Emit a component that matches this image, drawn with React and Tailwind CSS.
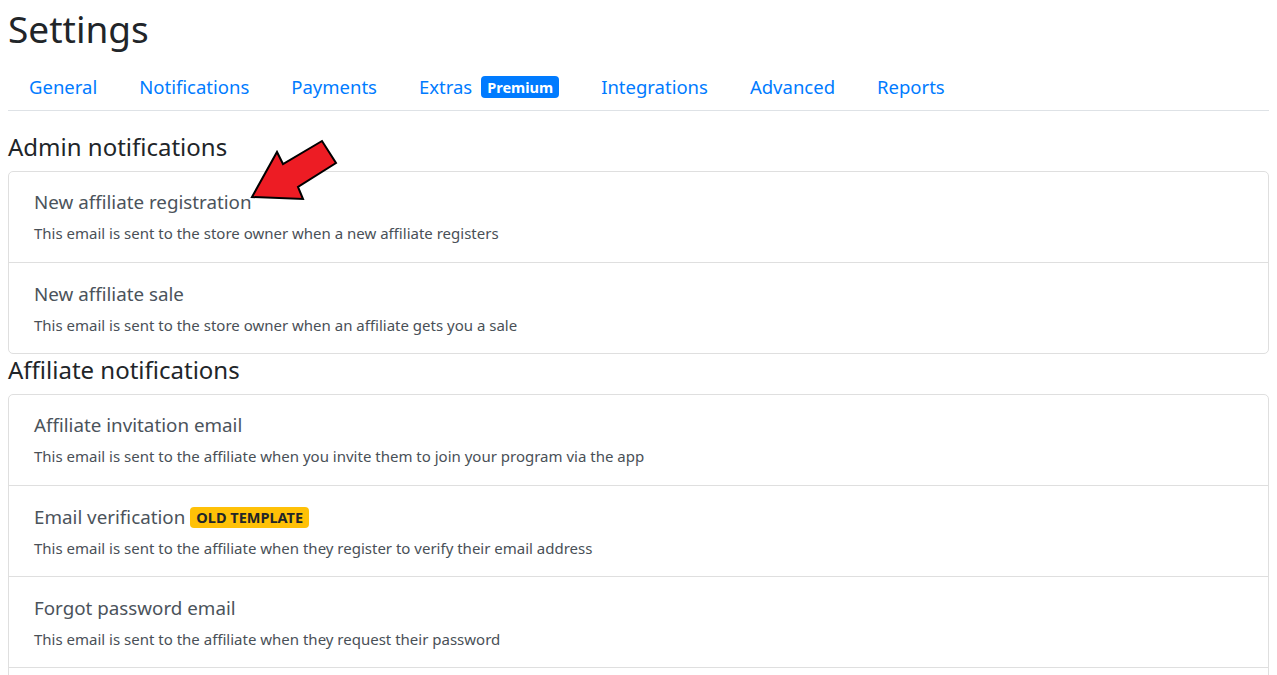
const tabs = [
  { label: 'General' },
  { label: 'Notifications' },
  { label: 'Payments' },
  { label: 'Extras', badge: 'Premium' },
  { label: 'Integrations' },
  { label: 'Advanced' },
  { label: 'Reports' },
];

const adminEmails = [
  { title: 'New affiliate registration', text: 'This email is sent to the store owner when a new affiliate registers' },
  { title: 'New affiliate sale', text: 'This email is sent to the store owner when an affiliate gets you a sale' },
];

const affiliateEmails = [
  { title: 'Affiliate invitation email', text: 'This email is sent to the affiliate when you invite them to join your program via the app' },
  { title: 'Email verification', badge: 'OLD TEMPLATE', text: 'This email is sent to the affiliate when they register to verify their email address' },
  { title: 'Forgot password email', text: 'This email is sent to the affiliate when they request their password' },
  { title: '', text: '' },
];

function EmailList({ items }) {
  return (
    <div className="rounded-[5px] border border-[#dfdfdf] bg-white">
      {items.map((item, i) => (
        <div
          key={i}
          className={`flex flex-col px-[25px] ${i > 0 ? 'h-[91px] border-t border-[#dfdfdf] pt-[18px]' : 'h-[90px] pt-[17px]'}`}
        >
          {item.title && (
            <>
              <div className="flex items-center gap-[5px] text-[18.8px] leading-[26px] text-[#4b535b]">
                <span>{item.title}</span>
                {item.badge && (
                  <span className="rounded-[4px] bg-[#ffc107] px-[6px] text-[14.5px] font-bold leading-[21px] text-[#212529]">
                    {item.badge}
                  </span>
                )}
              </div>
              <p className="mt-[8px] text-[15px] leading-[20px] text-[#495057]">{item.text}</p>
            </>
          )}
        </div>
      ))}
    </div>
  );
}

export default function App() {
  return (
    <div
      className="h-screen overflow-hidden bg-white px-2 text-[#212529]"
      style={{ fontFamily: '"Noto Sans", "Open Sans", sans-serif' }}
    >
      <div className="relative">
        <h1 className="pt-[4px] text-[37px] leading-[50px] text-[#212529]">Settings</h1>

        <nav className="mt-[11px] flex border-b border-[#dee2e6]">
          {tabs.map((t) => (
            <a
              key={t.label}
              href="#"
              className="flex h-[45px] items-center gap-[9px] px-[21px] pb-[2px] text-[18.5px] text-[#007bff]"
            >
              {t.label}
              {t.badge && (
                <span className="rounded-[4px] bg-[#007bff] px-[6px] text-[14.5px] font-bold leading-[22px] text-white">
                  {t.badge}
                </span>
              )}
            </a>
          ))}
        </nav>

        <h2 className="mt-[20px] text-[24px] leading-[32px] text-[#212529]">Admin notifications</h2>
        <div className="mt-[8px]">
          <EmailList items={adminEmails} />
        </div>

        <h2 className="text-[24px] leading-[32px] text-[#212529]">Affiliate notifications</h2>
        <div className="mt-[8px]">
          <EmailList items={affiliateEmails} />
        </div>

        <svg
          className="absolute left-[232px] top-[130px]"
          width="110"
          height="80"
          viewBox="240 130 110 80"
        >
          <polygon
            points="252,197 277,152 283,164 322,141 336,163 298,187 303,199"
            fill="#ed1c24"
            stroke="#000"
            strokeWidth="2"
            strokeLinejoin="miter"
          />
        </svg>
      </div>
    </div>
  );
}
